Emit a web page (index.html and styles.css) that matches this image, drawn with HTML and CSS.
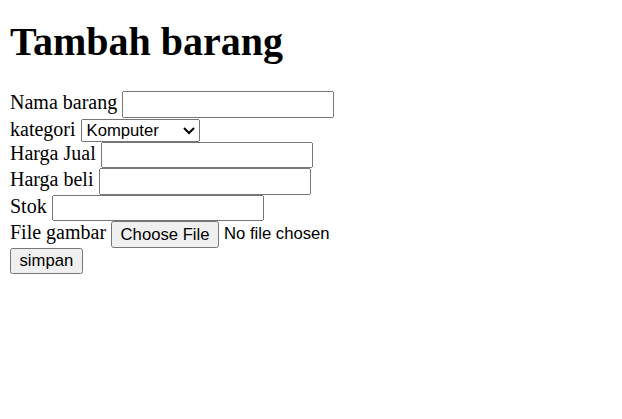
FILE: index.html
```html
<!DOCTYPE html>
<html>
<head>
<meta charset="utf-8">
<title>Tambah barang</title>
<link rel="stylesheet" href="styles.css">
</head>
<body class="page">
<h1 class="title">Tambah barang</h1>
<form class="form">
Nama barang <input type="text" class="field"><br>
kategori <select class="select"><option>Komputer</option><option>Elektronik</option></select><br>
Harga Jual <input type="text" class="field"><br>
Harga beli <input type="text" class="field"><br>
Stok <input type="text" class="field"><br>
File gambar <input type="file" class="file"><br>
<button type="submit" class="btn">simpan</button>
</form>
</body>
</html>
```
FILE: styles.css
```css
html {
  zoom: 1.25;
}
.page {
  margin: 8px;
  font-family: "Liberation Serif", "Times New Roman", serif;
  font-size: 16px;
  color: #000;
  background: #fff;
}
.title {
  font-size: 32px;
  font-weight: bold;
  margin: 6px 0 21.44px;
}
.field, .select, .file, .btn {
  font-family: "Liberation Sans", Arial, sans-serif;
  font-size: 13.333px;
}
.field {
  box-sizing: border-box;
  width: 169.6px;
}
.select {
  width: 95.5px;
}
```
